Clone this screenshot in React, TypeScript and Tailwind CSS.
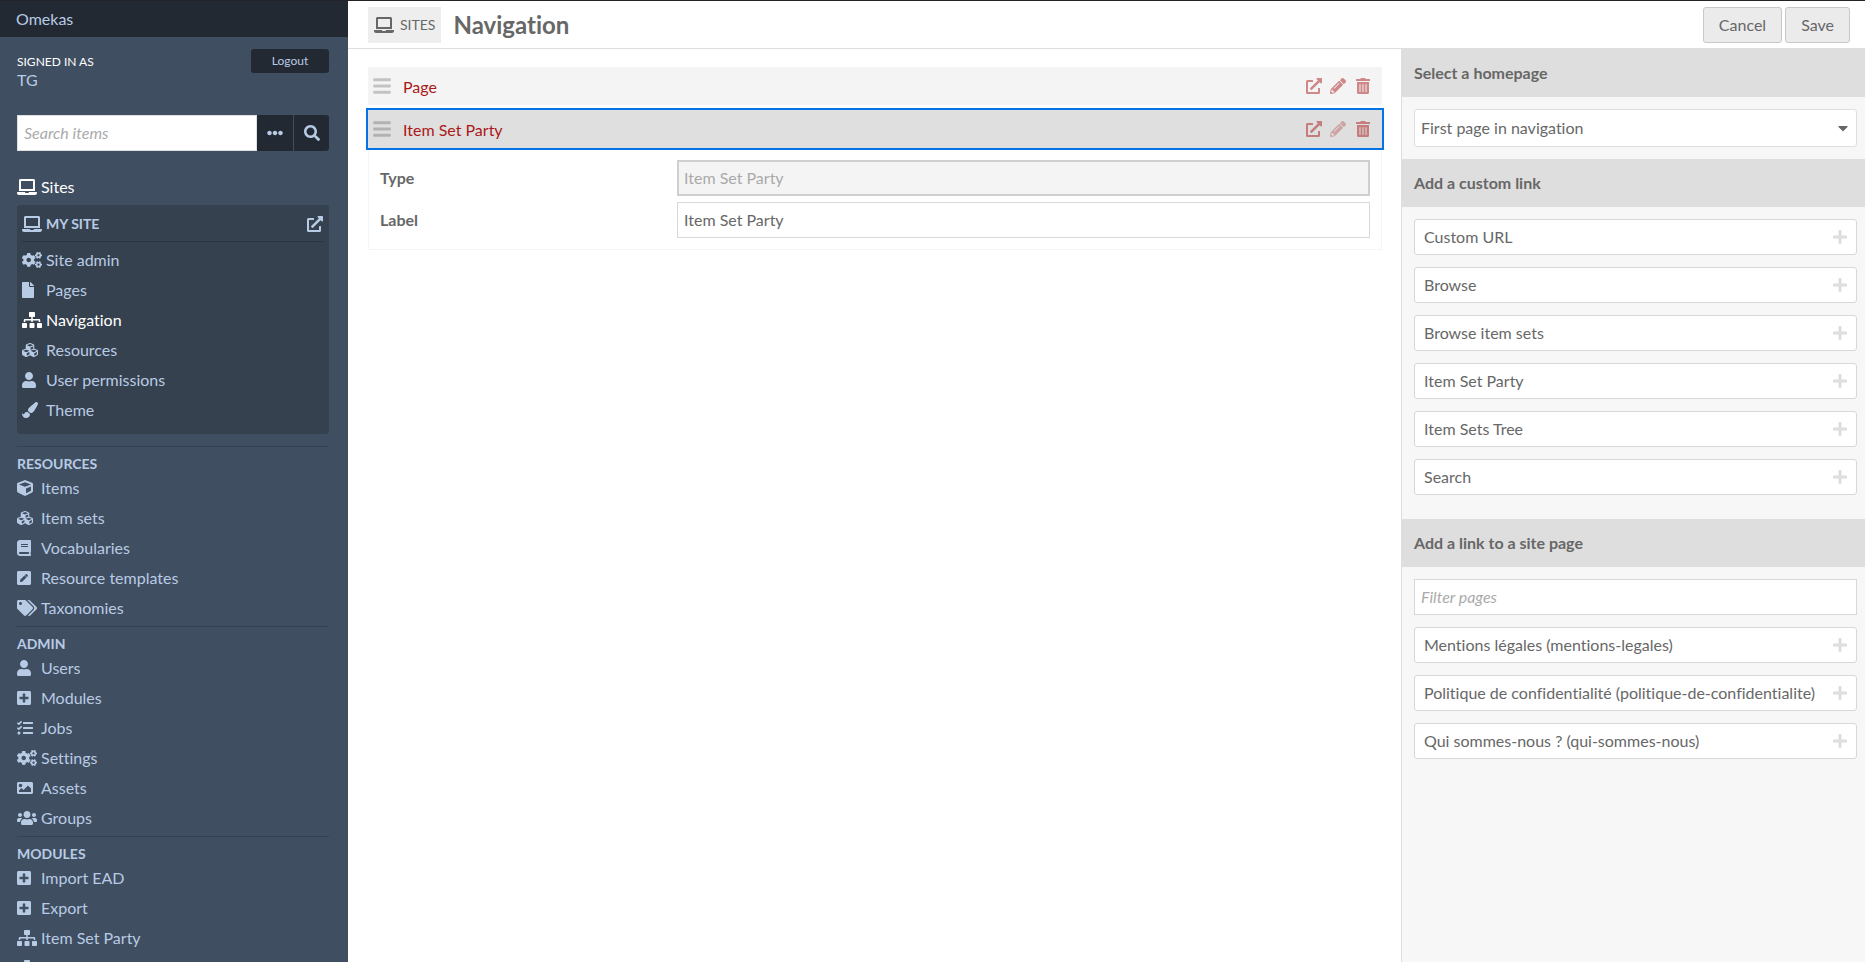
import type { ReactNode } from 'react';
import type { IconType } from 'react-icons';
import {
  FaBars, FaBook, FaCaretDown, FaCogs, FaCube, FaCubes, FaEllipsisH, FaExternalLinkAlt, FaFile, FaImage,
  FaLaptop, FaPaintBrush, FaPencilAlt, FaPenSquare, FaPlus, FaPlusSquare, FaSearch, FaSitemap, FaTags,
  FaTasks, FaTrashAlt, FaUser, FaUsers,
} from 'react-icons/fa';

type NavEntry = { label: string; icon: IconType; active?: boolean };

const siteNav: NavEntry[] = [
  { label: 'Site admin', icon: FaCogs },
  { label: 'Pages', icon: FaFile },
  { label: 'Navigation', icon: FaSitemap, active: true },
  { label: 'Resources', icon: FaCubes },
  { label: 'User permissions', icon: FaUser },
  { label: 'Theme', icon: FaPaintBrush },
];

const sections: { title: string; entries: NavEntry[] }[] = [
  {
    title: 'Resources',
    entries: [
      { label: 'Items', icon: FaCube },
      { label: 'Item sets', icon: FaCubes },
      { label: 'Vocabularies', icon: FaBook },
      { label: 'Resource templates', icon: FaPenSquare },
      { label: 'Taxonomies', icon: FaTags },
    ],
  },
  {
    title: 'Admin',
    entries: [
      { label: 'Users', icon: FaUser },
      { label: 'Modules', icon: FaPlusSquare },
      { label: 'Jobs', icon: FaTasks },
      { label: 'Settings', icon: FaCogs },
      { label: 'Assets', icon: FaImage },
      { label: 'Groups', icon: FaUsers },
    ],
  },
  {
    title: 'Modules',
    entries: [
      { label: 'Import EAD', icon: FaPlusSquare },
      { label: 'Export', icon: FaPlusSquare },
      { label: 'Item Set Party', icon: FaSitemap },
      { label: 'Item Sets Tree', icon: FaSitemap },
    ],
  },
];

const customLinks = ['Custom URL', 'Browse', 'Browse item sets', 'Item Set Party', 'Item Sets Tree', 'Search'];
const sitePages = [
  'Mentions légales (mentions-legales)',
  'Politique de confidentialité (politique-de-confidentialite)',
  'Qui sommes-nous ? (qui-sommes-nous)',
];

/* The icon set draws glyphs of several widths on one common height */
const glyphSizes = new Map<IconType, string>([
  [FaLaptop, 'h-4 w-5'],
  [FaCogs, 'h-4 w-5'],
  [FaSitemap, 'h-4 w-5'],
  [FaTags, 'h-4 w-5'],
  [FaUsers, 'h-4 w-5'],
  [FaUser, 'h-4 w-[14px]'],
  [FaBook, 'h-4 w-[14px]'],
  [FaPenSquare, 'h-4 w-[14px]'],
  [FaPlusSquare, 'h-4 w-[14px]'],
  [FaTrashAlt, 'h-4 w-[14px]'],
  [FaPlus, 'h-4 w-[14px]'],
  [FaFile, 'h-4 w-3'],
  [FaCaretDown, 'h-4 w-[10px]'],
  [FaBars, 'h-5 w-[18px]'],
]);

function Glyph({ icon: Icon }: { icon: IconType }) {
  return <Icon aria-hidden className={`shrink-0 ${glyphSizes.get(Icon) ?? 'h-4 w-4'}`} />;
}

function NavLink({ entry }: { entry: NavEntry }) {
  return (
    <li>
      <a href="#" className={`flex h-[30px] items-center ${entry.active ? 'text-white' : 'text-[#b8cbe4]'}`}>
        <span className="flex w-6 shrink-0"><Glyph icon={entry.icon} /></span>
        {entry.label}
      </a>
    </li>
  );
}

function Sidebar() {
  return (
    <header className="flex h-full w-[348px] shrink-0 flex-col overflow-hidden bg-[#404e61] text-[#b8cbe4]">
      <div className="flex h-9 shrink-0 items-center bg-[#232932] pl-4">
        <a href="#">Omekas</a>
      </div>
      <div className="pr-[19px] pl-[17px]">
        <div className="flex items-start justify-between pt-3">
          <div className="pt-[5px]">
            <p className="text-xs text-white uppercase">Signed in as</p>
            <a href="#" className="block leading-[19px]">TG</a>
          </div>
          <button className="h-6 w-[78px] rounded-[3px] bg-[#232932] text-xs">Logout</button>
        </div>
        <form className="mt-[26px] flex h-9" onSubmit={(e) => e.preventDefault()}>
          <input
            type="text"
            aria-label="Search items"
            placeholder="Search items"
            className="min-w-0 flex-1 border border-[#dfdfdf] bg-white px-[6px] text-[#676767] outline-none placeholder:text-[#aaa] placeholder:italic"
          />
          <button type="button" aria-label="Advanced search" className="flex w-9 items-center justify-center bg-[#232932]">
            <Glyph icon={FaEllipsisH} />
          </button>
          <button type="submit" aria-label="Search" className="flex w-9 items-center justify-center rounded-r-[3px] border-l border-[#404e61] bg-[#232932]">
            <Glyph icon={FaSearch} />
          </button>
        </form>
        <nav className="pt-[21px]">
          <a href="#" className="flex h-[30px] items-center text-white">
            <span className="flex w-6 shrink-0"><Glyph icon={FaLaptop} /></span>
            Sites
          </a>
          <div className="mt-[3px] mb-3 rounded-[3px] bg-[#36414f] pr-[6px] pb-[9px] pl-[5px]">
            <div className="flex h-[37px] items-center border-b border-[#2b3440] pt-px">
              <span className="flex w-6 shrink-0"><Glyph icon={FaLaptop} /></span>
              <a href="#" className="flex-1 text-sm font-bold uppercase">My site</a>
              <a href="#" aria-label="View site"><Glyph icon={FaExternalLinkAlt} /></a>
            </div>
            <ul className="pt-[3px]">
              {siteNav.map((e) => <NavLink key={e.label} entry={e} />)}
            </ul>
          </div>
          {sections.map((s) => (
            <section key={s.title} className="border-t border-[#36414f] pt-[7px] pb-[3px]">
              <h4 className="text-sm leading-[19px] font-bold uppercase">{s.title}</h4>
              <ul>
                {s.entries.map((e) => <NavLink key={e.label} entry={e} />)}
              </ul>
            </section>
          ))}
        </nav>
      </div>
    </header>
  );
}

function TopBar() {
  return (
    <div className="flex h-12 shrink-0 items-center border-b border-[#dedede] pr-[15px] pl-5">
      <a href="#" className="mr-3 flex h-9 items-center gap-[6px] bg-[#eee] px-[6px] text-sm uppercase">
        <Glyph icon={FaLaptop} />
        Sites
      </a>
      <h1 className="flex-1 text-2xl font-bold">Navigation</h1>
      <div className="flex gap-[3px]">
        <a href="#" className="flex h-9 items-center rounded-[3px] border border-[#c8c8c8] bg-[#ebebeb] px-[15px]">Cancel</a>
        <button className="h-9 rounded-[3px] border border-[#c8c8c8] bg-[#ebebeb] px-[15px]">Save</button>
      </div>
    </div>
  );
}

function LinkRow({ label, open }: { label: string; open?: boolean }) {
  return (
    <div className={`flex h-[38px] items-center pr-3 pl-[5px] ${open ? 'bg-[#dfdfdf] outline-2 outline-[#0473e8]' : 'bg-[#f4f4f4]'}`}>
      <span className="w-[30px] text-black/20"><Glyph icon={FaBars} /></span>
      <a href="#" className="flex-1 pt-[2px] text-[#a91919]">{label}</a>
      <div className="flex gap-2 text-[#a91919]/50">
        <a href="#" aria-label={`View ${label}`}><Glyph icon={FaExternalLinkAlt} /></a>
        <button aria-label={`Edit ${label}`} className={open ? 'opacity-60' : ''}><Glyph icon={FaPencilAlt} /></button>
        <button aria-label={`Remove ${label}`} className="pl-[2px]"><Glyph icon={FaTrashAlt} /></button>
      </div>
    </div>
  );
}

function NavigationEditor() {
  return (
    <main className="min-w-0 flex-1 pt-[18px] pr-[19px] pl-5">
      <div className="flex flex-col gap-[5px]">
        <LinkRow label="Page" />
        <LinkRow label="Item Set Party" open />
      </div>
      <div className="flex flex-col gap-[6px] border border-[#f4f4f4] px-[11px] pt-[11px] pb-[11px]">
        <div className="flex h-9 items-center">
          <label htmlFor="link-type" className="w-[30%] font-bold">Type</label>
          <input id="link-type" disabled defaultValue="Item Set Party" className="h-full min-w-0 flex-1 border-2 border-[#cfcfcf] bg-[#f4f4f4] px-[5px] pb-px text-[#aaa]" />
        </div>
        <div className="flex h-9 items-center">
          <label htmlFor="link-label" className="w-[30%] font-bold">Label</label>
          <input id="link-label" defaultValue="Item Set Party" className="h-full min-w-0 flex-1 border border-[#d8d8d8] bg-white px-[6px] pb-px" />
        </div>
      </div>
    </main>
  );
}

function PanelHeading({ children }: { children: ReactNode }) {
  return <h3 className="flex h-12 items-center bg-[#dedede] pl-3 font-bold">{children}</h3>;
}

function AddButton({ label }: { label: string }) {
  return (
    <button className="flex h-9 w-full items-center justify-between rounded-[3px] border border-[#d8d8d8] bg-white px-[9px] text-left">
      {label}
      <span className="text-[#dedede]"><Glyph icon={FaPlus} /></span>
    </button>
  );
}

function LinkPanel() {
  return (
    <aside className="w-[464px] shrink-0 border-l border-[#dedede] bg-[#f7f7f7]">
      <PanelHeading>Select a homepage</PanelHeading>
      <div className="grid items-center py-3 pr-2 pl-3">
        <select aria-label="Homepage" className="col-start-1 row-start-1 h-[38px] w-full appearance-none rounded-[3px] border border-[#dedede] bg-white px-[6px]">
          <option>First page in navigation</option>
        </select>
        <span className="pointer-events-none col-start-1 row-start-1 mr-[9px] justify-self-end"><Glyph icon={FaCaretDown} /></span>
      </div>
      <PanelHeading>Add a custom link</PanelHeading>
      <div className="flex flex-col gap-3 pt-3 pr-2 pb-6 pl-3">
        {customLinks.map((l) => <AddButton key={l} label={l} />)}
      </div>
      <PanelHeading>Add a link to a site page</PanelHeading>
      <div className="flex flex-col gap-3 pt-3 pr-2 pl-3">
        <input
          type="text"
          aria-label="Filter pages"
          placeholder="Filter pages"
          className="h-9 border border-[#d8d8d8] bg-white px-[6px] pb-px placeholder:text-[#aaa] placeholder:italic"
        />
        {sitePages.map((l) => <AddButton key={l} label={l} />)}
      </div>
    </aside>
  );
}

export default function App() {
  return (
    <div className="flex h-screen border-t border-[#232328] bg-white font-['Lato',sans-serif] text-base text-[#676767] [font-variant-ligatures:no-common-ligatures]">
      <Sidebar />
      <div className="flex min-w-0 flex-1 flex-col">
        <TopBar />
        <div className="flex min-h-0 flex-1">
          <NavigationEditor />
          <LinkPanel />
        </div>
      </div>
    </div>
  );
}
